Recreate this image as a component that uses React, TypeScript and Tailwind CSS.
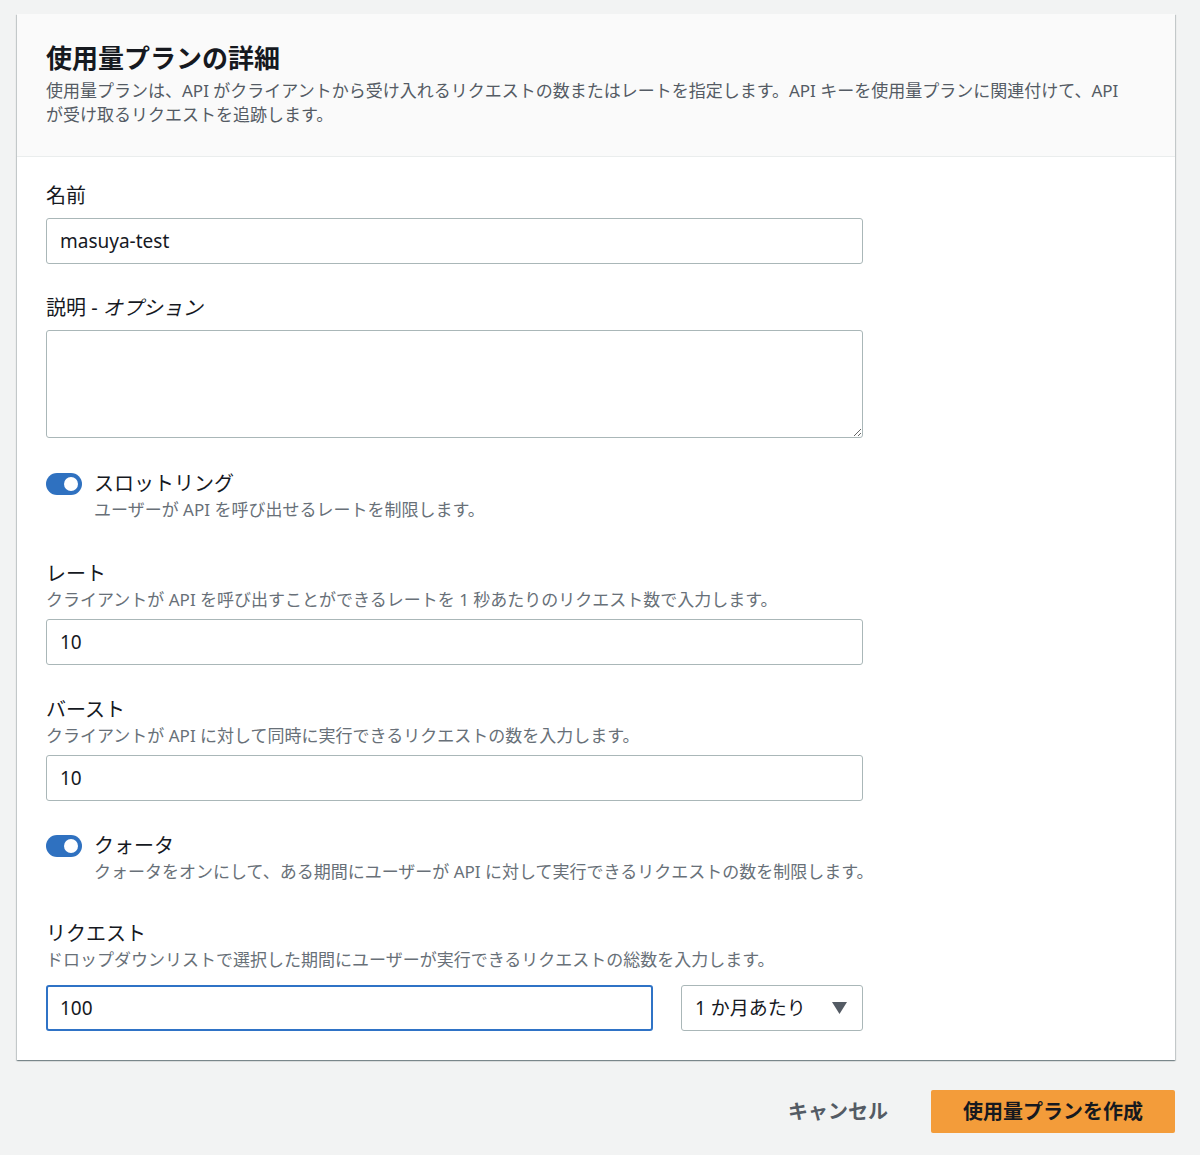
import React from 'react';

const font = { fontFamily: '"Noto Sans", "Noto Sans CJK JP", sans-serif' };

const Toggle: React.FC = () => (
  <div className="relative mt-[3px] h-[22px] w-[36px] shrink-0 rounded-full bg-[#2f71c0]">
    <div className="absolute right-[4px] top-[4px] h-[14px] w-[14px] rounded-full bg-white" />
  </div>
);

interface FieldProps {
  label: React.ReactNode;
  hint?: string;
  children: React.ReactNode;
}

const Field: React.FC<FieldProps> = ({ label, hint, children }) => (
  <div className="flex flex-col">
    <div className="text-[20px] leading-[28px] text-[#16191f]">{label}</div>
    {hint && <div className="text-[17px] leading-[24px] text-[#687078]">{hint}</div>}
    <div className={hint ? 'mt-[7px]' : 'mt-[8px]'}>{children}</div>
  </div>
);

const TextInput: React.FC<{ value: string; focused?: boolean; className?: string }> = ({
  value,
  focused,
  className = 'w-[817px]'
}) => (
  <div
    className={`flex h-[46px] items-center rounded-[3px] bg-white ${
      focused ? 'border-2 border-[#2f73c6] px-[12px]' : 'border border-[#aab7b8] px-[13px]'
    } ${className}`}
  >
    <span className="text-[19px] text-[#16191f]">{value}</span>
  </div>
);

const ToggleRow: React.FC<{ label: string; hint: string }> = ({ label, hint }) => (
  <div className="flex gap-[12px]">
    <Toggle />
    <div className="flex flex-col">
      <div className="text-[20px] leading-[28px] text-[#16191f]">{label}</div>
      <div className="text-[17px] leading-[24px] text-[#687078]">{hint}</div>
    </div>
  </div>
);

export default function App() {
  return (
    <div className="min-h-[1155px] bg-[#f2f3f3] pl-[17px] pr-[25px] pt-[14px]" style={font}>
      <div className="bg-white shadow-[0_1px_1px_0_rgba(0,28,36,0.3),1px_1px_1px_0_rgba(0,28,36,0.15),-1px_1px_1px_0_rgba(0,28,36,0.15)]">
        <div className="border-b border-[#eaeded] bg-[#fafafa] px-[29px] pb-[29px] pt-[28px]">
          <h2 className="text-[26px] font-bold leading-[32px] text-[#16191f]">使用量プランの詳細</h2>
          <p className="mt-[5px] text-[17px] leading-[24px] text-[#545b64]">
            使用量プランは、API がクライアントから受け入れるリクエストの数またはレートを指定します。API キーを使用量プランに関連付けて、API
            <br />
            が受け取るリクエストを追跡します。
          </p>
        </div>

        <div className="flex flex-col px-[29px] pb-[29px] pt-[25px]">
          <Field label="名前">
            <TextInput value="masuya-test" />
          </Field>

          <div className="mt-[30px]">
            <Field
              label={
                <>
                  説明 - <i>オプション</i>
                </>
              }
            >
              <textarea className="block h-[108px] w-[817px] rounded-[3px] border border-[#aab7b8] bg-white px-[13px] py-[8px] text-[19px] outline-none" />
            </Field>
          </div>

          <div className="mt-[32px]">
            <ToggleRow label="スロットリング" hint="ユーザーが API を呼び出せるレートを制限します。" />
          </div>

          <div className="mt-[38px]">
            <Field
              label="レート"
              hint="クライアントが API を呼び出すことができるレートを 1 秒あたりのリクエスト数で入力します。"
            >
              <TextInput value="10" />
            </Field>
          </div>

          <div className="mt-[31px]">
            <Field label="バースト" hint="クライアントが API に対して同時に実行できるリクエストの数を入力します。">
              <TextInput value="10" />
            </Field>
          </div>

          <div className="mt-[31px]">
            <ToggleRow
              label="クォータ"
              hint="クォータをオンにして、ある期間にユーザーが API に対して実行できるリクエストの数を制限します。"
            />
          </div>

          <div className="mt-[36px]">
            <Field label="リクエスト" hint="ドロップダウンリストで選択した期間にユーザーが実行できるリクエストの総数を入力します。">
              <div className="flex gap-[28px] pt-[6px]">
                <TextInput value="100" focused className="w-[607px]" />
                <div className="flex h-[46px] w-[182px] items-center justify-between rounded-[3px] border border-[#aab7b8] bg-white pl-[13px] pr-[15px]">
                  <span className="text-[19px] text-[#16191f]">1 か月あたり</span>
                  <svg width="15" height="12" viewBox="0 0 15 12">
                    <path d="M0 0 H15 L7.5 12 Z" fill="#545b64" />
                  </svg>
                </div>
              </div>
            </Field>
          </div>
        </div>
      </div>

      <div className="mt-[30px] flex items-center justify-end gap-[43px]">
        <span className="text-[20px] font-bold text-[#545b64]">キャンセル</span>
        <button className="h-[43px] w-[244px] rounded-[2px] bg-[#f39c3a] text-[20px] font-bold text-[#16191f]">
          使用量プランを作成
        </button>
      </div>
    </div>
  );
}
